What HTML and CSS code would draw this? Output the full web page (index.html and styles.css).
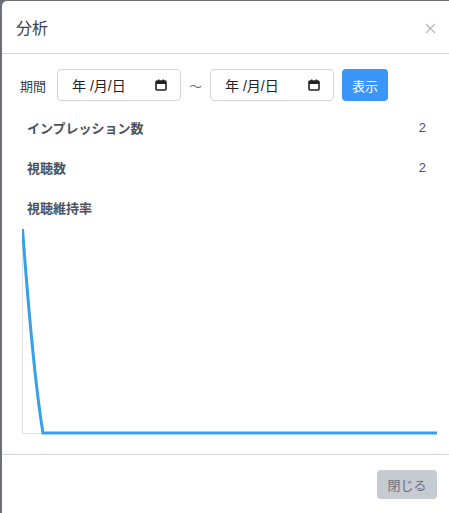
FILE: index.html
```html
<!DOCTYPE html>
<html lang="ja">
<head>
    <meta charset="UTF-8">
    <meta name="viewport" content="width=device-width, initial-scale=1.0">
    <title>分析</title>
    <link rel="stylesheet" href="styles.css">
</head>
<body>
    <div class="modal">
        <div class="modal-header">
            <h1>分析</h1>
            <button class="close-btn" aria-label="閉じる">
                <svg width="11" height="11" viewBox="0 0 11 11">
                    <path d="M1 1 L10 10 M10 1 L1 10" stroke="#b4b8bf" stroke-width="1.2" fill="none"/>
                </svg>
            </button>
        </div>

        <div class="modal-body">
            <div class="filter-row">
                <span class="filter-label">期間</span>
                <div class="date-input">
                    <span>年 /月/日</span>
                    <svg class="cal-icon" width="12" height="12" viewBox="0 0 12 12">
                        <rect x="1" y="2" width="10" height="9" rx="1" fill="none" stroke="#222" stroke-width="1.6"/>
                        <rect x="1" y="2" width="10" height="3" fill="#222"/>
                        <rect x="3" y="0.5" width="1.4" height="2.5" fill="#222"/>
                        <rect x="7.6" y="0.5" width="1.4" height="2.5" fill="#222"/>
                    </svg>
                </div>
                <span class="tilde">〜</span>
                <div class="date-input">
                    <span>年 /月/日</span>
                    <svg class="cal-icon" width="12" height="12" viewBox="0 0 12 12">
                        <rect x="1" y="2" width="10" height="9" rx="1" fill="none" stroke="#222" stroke-width="1.6"/>
                        <rect x="1" y="2" width="10" height="3" fill="#222"/>
                        <rect x="3" y="0.5" width="1.4" height="2.5" fill="#222"/>
                        <rect x="7.6" y="0.5" width="1.4" height="2.5" fill="#222"/>
                    </svg>
                </div>
                <button class="show-btn">表示</button>
            </div>

            <div class="stats">
                <div class="stat-row">
                    <span class="stat-label">インプレッション数</span>
                    <span class="stat-value">2</span>
                </div>
                <div class="stat-row">
                    <span class="stat-label">視聴数</span>
                    <span class="stat-value">2</span>
                </div>
                <div class="stat-row">
                    <span class="stat-label">視聴維持率</span>
                </div>
            </div>

            <div class="chart">
                <svg width="415" height="208" viewBox="0 0 415 208">
                    <line x1="0.5" y1="2" x2="0.5" y2="205" stroke="#e2e2e2" stroke-width="1"/>
                    <line x1="0" y1="205.5" x2="22" y2="205.5" stroke="#e2e2e2" stroke-width="1"/>
                    <path d="M0.5 1 C5 60 11 145 21 205 L415 205" fill="none" stroke="#36a0e8" stroke-width="3"/>
                </svg>
            </div>
        </div>

        <div class="modal-footer">
            <button class="close-footer-btn">閉じる</button>
        </div>
    </div>
</body>
</html>
```

FILE: styles.css
```css
body {
    margin: 0;
    background-color: #6c6f78;
    font-family: "Liberation Sans", "Noto Sans CJK JP", sans-serif;
    overflow: hidden;
    height: 513px;
}

.modal {
    margin: 1px 0 0 2px;
    width: 447px;
    height: 512px;
    background: white;
    border-radius: 5px 0 0 0;
}

.modal-header {
    height: 52px;
    display: flex;
    align-items: center;
    justify-content: space-between;
    padding: 0 13px 0 14px;
    border-bottom: 1px solid #d3d6db;
}

.modal-header h1 {
    margin: 0;
    font-size: 16px;
    font-weight: normal;
    color: #3a3f47;
}

.close-btn {
    background: none;
    border: none;
    padding: 0;
    width: 12px;
    height: 12px;
    display: flex;
    align-items: center;
    justify-content: center;
    margin-top: 2px;
}

.modal-body {
    padding: 15px 0 0 0;
}

.filter-row {
    display: flex;
    align-items: center;
    height: 32px;
    padding-left: 18px;
}

.filter-label {
    font-size: 13px;
    color: #374151;
    width: 37px;
}

.date-input {
    box-sizing: border-box;
    width: 124px;
    height: 32px;
    border: 1px solid #d1d5db;
    border-radius: 4px;
    display: flex;
    align-items: center;
    justify-content: space-between;
    padding: 0 13px 0 14px;
    font-size: 14px;
    color: #222;
}

.cal-icon {
    display: block;
}

.tilde {
    width: 29px;
    text-align: center;
    font-size: 13px;
    color: #6b7280;
}

.show-btn {
    margin-left: 8px;
    width: 46px;
    height: 32px;
    border: none;
    border-radius: 4px;
    background: #3b97f6;
    color: white;
    font-family: inherit;
    font-size: 13px;
    padding: 0;
}

.stats {
    padding: 6px 23px 0 25px;
}

.stat-row {
    height: 40px;
    display: flex;
    align-items: center;
    justify-content: space-between;
    font-size: 13px;
    color: #4a5262;
}

.stat-label {
    font-weight: bold;
}

.chart {
    margin-top: 1px;
    margin-left: 20px;
    height: 208px;
}

.chart svg {
    display: block;
}

.modal-footer {
    margin-top: 18px;
    border-top: 1px solid #d3d6db;
    padding: 15px 12px 0 0;
    display: flex;
    justify-content: flex-end;
}

.close-footer-btn {
    width: 60px;
    height: 29px;
    border: none;
    border-radius: 4px;
    background: #c6cad1;
    color: #6b7280;
    font-family: inherit;
    font-size: 13px;
    padding: 0;
}
```
